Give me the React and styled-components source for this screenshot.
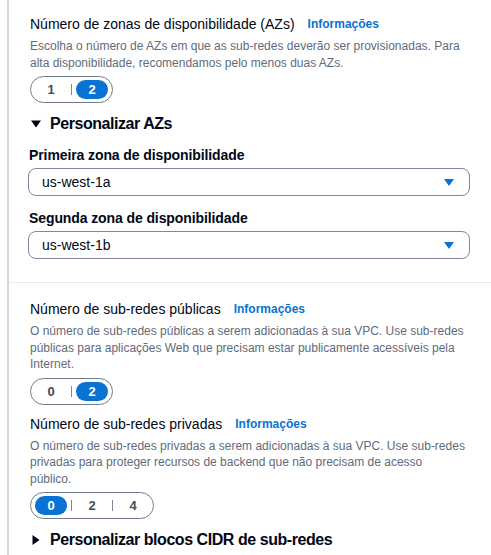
import React from "react";
import styled, { createGlobalStyle } from "styled-components";

const Global = createGlobalStyle`
    body {
        margin: 0;
        background: #ffffff;
        font-family: "Liberation Sans", Arial, sans-serif;
        color: #000716;
    }
`

const Page = styled.div`
    margin-left: 7px;
    border-left: 2px solid #d5d9de;
    min-height: 555px;
`

const Section = styled.div`
    display: flex;
    flex-direction: column;
    padding: ${(p) => p.top}px 21px ${(p) => p.bottom}px 19px;
    border-bottom: ${(p) => (p.divider ? "1px solid #e9ebed" : "none")};
`

const TitleRow = styled.div`
    display: flex;
    align-items: center;
    gap: 13px;
    height: 20px;
    margin-top: ${(p) => p.mt || 0}px;
    padding-left: 2px;
`

const Title = styled.span`
    font-size: 14px;
    line-height: 20px;
    color: #000716;
`

const Info = styled.a`
    font-size: 12px;
    font-weight: 700;
    color: #0972d3;
    text-decoration: none;
    line-height: 20px;
`

const Desc = styled.p`
    margin: 4px 0 0 2px;
    font-size: 12px;
    line-height: 16.5px;
    color: #5f6b7a;
`

const Toggle = styled.div`
    display: inline-flex;
    align-self: flex-start;
    align-items: center;
    margin-top: 5px;
    margin-left: 2px;
    height: 27px;
    box-sizing: border-box;
    padding: 0 4px;
    border: 1px solid #6f7b8a;
    border-radius: 14px;
`

const Seg = styled.span`
    display: flex;
    align-items: center;
    justify-content: center;
    width: 32px;
    height: 19px;
    border-radius: 10px;
    font-size: 13px;
    font-weight: 700;
    color: ${(p) => (p.active ? "#ffffff" : "#414d5c")};
    background: ${(p) => (p.active ? "#0972d3" : "transparent")};
`

const Sep = styled.span`
    width: 1px;
    height: 11px;
    margin: 0 4px;
    background: #7d8998;
`

const Expander = styled.div`
    display: flex;
    align-items: center;
    gap: 9px;
    height: 22px;
    margin-top: ${(p) => p.mt || 0}px;
    padding-left: 3px;
    font-size: 16px;
    font-weight: 700;
    letter-spacing: -0.45px;
    color: #000716;
`

const Label = styled.div`
    font-size: 14px;
    font-weight: 700;
    line-height: 20px;
    letter-spacing: -0.1px;
    margin-top: ${(p) => p.mt || 0}px;
    padding-left: 1px;
`

const Select = styled.div`
    display: flex;
    align-items: center;
    justify-content: space-between;
    height: 28px;
    box-sizing: border-box;
    margin-top: 3px;
    padding: 0 15px 0 13px;
    border: 1px solid #7d8998;
    border-radius: 8px;
    font-size: 14px;
    color: #000716;
`

const Caret = () => (
    <svg width="10" height="7" viewBox="0 0 10 7">
        <polygon points="0,0 10,0 5,7" fill="#0972d3" />
    </svg>
)

const Arrow = ({ open }) => (
    <svg width="10" height="10" viewBox="0 0 10 10">
        {open
            ? <polygon points="0,1.5 10,1.5 5,8.5" fill="#000716" />
            : <polygon points="1.5,0 8.5,5 1.5,10" fill="#000716" />}
    </svg>
)

const SegToggle = ({ items, active }) => (
    <Toggle>
        {items.map((item, i) => (
            <React.Fragment key={item}>
                {i > 0 && <Sep />}
                <Seg active={item === active}>{item}</Seg>
            </React.Fragment>
        ))}
    </Toggle>
)

const App = () => {
    return (
        <Page>
            <Global />
            <Section top={14} bottom={23} divider>
                <TitleRow>
                    <Title>Número de zonas de disponibilidade (AZs)</Title>
                    <Info>Informações</Info>
                </TitleRow>
                <Desc>
                    Escolha o número de AZs em que as sub-redes deverão ser provisionadas. Para<br />
                    alta disponibilidade, recomendamos pelo menos duas AZs.
                </Desc>
                <SegToggle items={["1", "2"]} active="2" />

                <Expander mt={10}>
                    <Arrow open />
                    Personalizar AZs
                </Expander>

                <Label mt={10}>Primeira zona de disponibilidade</Label>
                <Select>
                    us-west-1a
                    <Caret />
                </Select>

                <Label mt={12}>Segunda zona de disponibilidade</Label>
                <Select>
                    us-west-1b
                    <Caret />
                </Select>
            </Section>

            <Section top={16} bottom={0}>
                <TitleRow>
                    <Title>Número de sub-redes públicas</Title>
                    <Info>Informações</Info>
                </TitleRow>
                <Desc>
                    O número de sub-redes públicas a serem adicionadas à sua VPC. Use sub-redes<br />
                    públicas para aplicações Web que precisam estar publicamente acessíveis pela<br />
                    Internet.
                </Desc>
                <SegToggle items={["0", "2"]} active="2" />

                <TitleRow mt={9}>
                    <Title>Número de sub-redes privadas</Title>
                    <Info>Informações</Info>
                </TitleRow>
                <Desc>
                    O número de sub-redes privadas a serem adicionadas à sua VPC. Use sub-redes<br />
                    privadas para proteger recursos de backend que não precisam de acesso<br />
                    público.
                </Desc>
                <SegToggle items={["0", "2", "4"]} active="0" />

                <Expander mt={10}>
                    <Arrow />
                    Personalizar blocos CIDR de sub-redes
                </Expander>
            </Section>
        </Page>
    );
}

export default App;
